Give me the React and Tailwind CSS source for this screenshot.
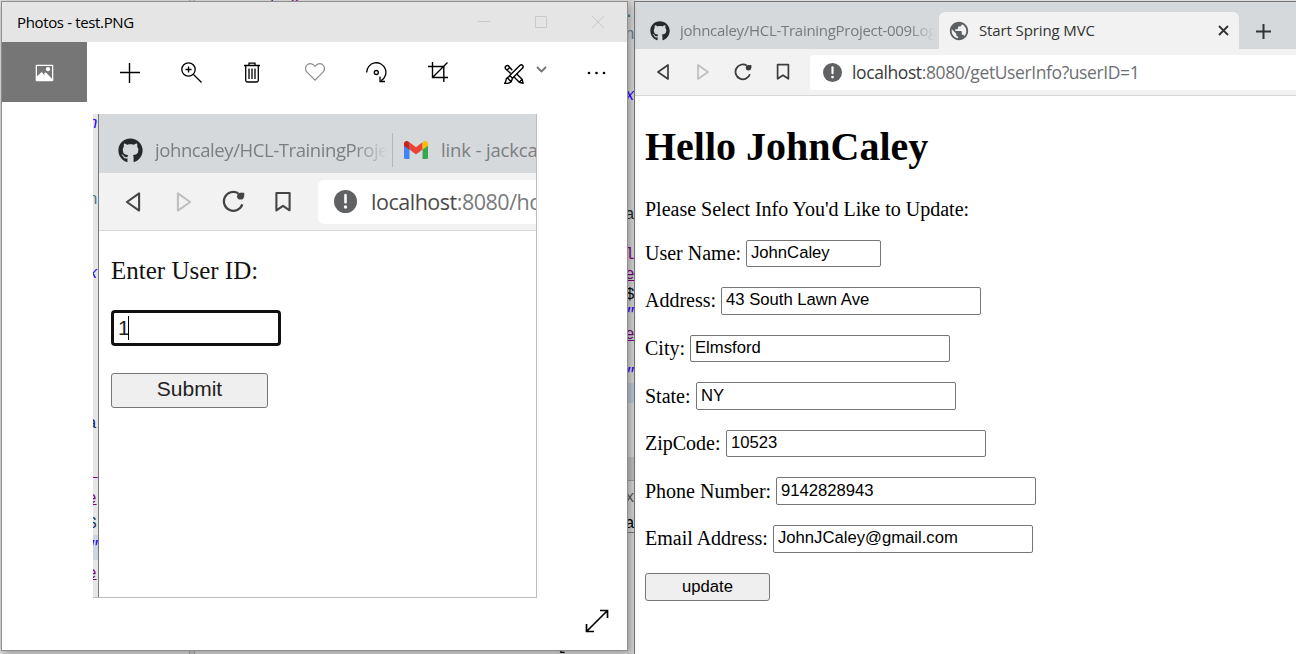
import React from "react";
import { FaGithub } from "react-icons/fa";
import { MdPublic } from "react-icons/md";

const stroke = { fill: "none", stroke: "currentColor" };

function Back({ className }) {
  return (
    <svg viewBox="0 0 14 18" className={className} {...stroke} strokeWidth="1.700" strokeLinejoin="round">
      <path d="M12 2v14L2 9z" />
    </svg>
  );
}

function Reload({ className }) {
  return (
    <svg viewBox="0 0 18 18" className={className} {...stroke} strokeWidth="1.800">
      <path d="M12.700 2.500A7.400 7.400 0 1 0 15.900 11.300" />
      <circle cx="14.500" cy="4.800" r="2.700" fill="currentColor" stroke="none" />
      <path d="M14.500 2.100h2.900v3z" fill="currentColor" stroke="none" />
    </svg>
  );
}

function Bookmark({ className }) {
  return (
    <svg viewBox="0 0 14 18" className={className} {...stroke} strokeWidth="1.700" strokeLinejoin="round">
      <path d="M1.600 1.600h10.800v14.200L7 12.200l-5.400 3.600z" />
    </svg>
  );
}

function Alert({ className }) {
  return (
    <svg viewBox="0 0 18 18" className={className}>
      <circle cx="9" cy="9" r="9" fill="#5f6163" />
      <path d="M9 4v5.600" stroke="#fff" strokeWidth="2" strokeLinecap="round" />
      <circle cx="9" cy="13.300" r="1.300" fill="#fff" />
    </svg>
  );
}

function Gmail({ className }) {
  return (
    <svg viewBox="0 0 24 18" className={className}>
      <path d="M0 3v13.400C0 17.300.7 18 1.600 18h3.900V6z" fill="#4285f4" />
      <path d="M24 3v13.400c0 .9-.7 1.600-1.600 1.600h-3.900V6z" fill="#34a853" />
      <path d="M5.500 8.500V1.300L12 6.200l6.500-4.900v7.200L12 13.400z" fill="#ea4335" />
      <path d="M0 2.800v2l5.500 4V1.300L4 .5C2.200-.6 0 .6 0 2.800z" fill="#c5221f" />
      <path d="M24 2.800v2l-5.500 4V1.300L20 .5c1.800-1.100 4 .1 4 2.300z" fill="#fbbc04" />
    </svg>
  );
}

function PhotosWindow() {
  return (
    <section className="absolute left-px top-px flex h-[650px] w-[627px] flex-col border border-[#8f8f8f] bg-white shadow-[2px_3px_8px_rgba(0,0,0,0.3)]">
      <header className="flex h-10 shrink-0 items-center bg-[#e5e5e5] pl-[15px] text-black">
        <h2 className="w-[160px] whitespace-nowrap pt-px text-[15px] tracking-[-0.350px]">Photos - test.PNG</h2>
        <div className="ml-auto flex items-center pr-[23px] text-[#c9c9c9]">
          <svg className="mr-[45px] h-3 w-3" viewBox="0 0 12 12" {...stroke}><path d="M0 5.500h12" /></svg>
          <svg className="mr-[45px] h-3 w-3" viewBox="0 0 12 12" {...stroke}><path d="M.5.5h11v11H.5z" /></svg>
          <svg className="h-3 w-3" viewBox="0 0 12 12" {...stroke}><path d="m0 0 12 12M12 0 0 12" /></svg>
        </div>
      </header>
      <nav className="flex h-[60px] shrink-0 items-center text-black">
        <div className="flex h-[60px] w-[85px] items-center justify-center bg-[#767676]">
          <svg className="mt-[2px] h-[18px] w-[19px]" viewBox="0 0 19 18">
            <rect x=".7" y=".7" width="17.600" height="16.600" rx="1" fill="#fff" />
            <path d="M2 2h15v14L10.800 9.600 9.300 11 6.700 8 2 12.200z" fill="#767676" />
            <path d="m9 9.800 1.700-1.600 6.300 6.600v1.500h-1.600z" fill="#fff" />
            <circle cx="13" cy="5.200" r="2.100" fill="#fff" />
          </svg>
        </div>
        <svg className="ml-[33px] mt-[2px] h-5 w-5" viewBox="0 0 20 20" {...stroke} strokeWidth="1.400"><path d="M9.500 0v20M0 9.500h20" /></svg>
        <svg className="ml-[41px] h-[21px] w-[21px]" viewBox="0 0 21 21" {...stroke} strokeWidth="1.300">
          <circle cx="7.500" cy="7.500" r="6.700" /><path d="m12.500 12.500 8 8M7.500 4.500v6M4.500 7.500h6" />
        </svg>
        <svg className="ml-[42px] h-[21px] w-4" viewBox="0 0 16 21" {...stroke} strokeWidth="1.300">
          <path d="M0 3.500h16M5 3.500V1.200h6v2.300M1.700 3.500v14.800c0 1 .6 1.700 1.600 1.700h9.400c1 0 1.600-.7 1.600-1.700V3.500M5 6.500v10.500M8 6.500v10.500M11 6.500v10.500" />
        </svg>
        <svg className="ml-[45px] h-[18px] w-5 text-[#8b8b8b]" viewBox="0 0 20 18" {...stroke} strokeWidth="1.200">
          <path d="M10 17.200 2 9.200C-1.500 5 2-.5 6.500.9 8.500 1.500 10 3.500 10 3.500S11.500 1.500 13.500.9C18-.5 21.500 5 18 9.200z" />
        </svg>
        <svg className="ml-[41px] h-[21px] w-[21px]" viewBox="0 0 21 21" {...stroke} strokeWidth="1.300">
          <path d="M.7 10.500a9.600 9.600 0 1 1 14.500 8.100M14 14.500v5h5" /><circle cx="10.300" cy="10.500" r="2" />
        </svg>
        <svg className="ml-[41px] h-5 w-5" viewBox="0 0 20 20" {...stroke} strokeWidth="1.400">
          <path d="M4.500 0v15.500H20M0 4.500h15.800V20M4.500 15.500 19.500.5" />
        </svg>
        <svg className="ml-[56px] mt-[3px] h-5 w-5" viewBox="0 0 20 20" {...stroke} strokeWidth="1.400" strokeLinejoin="round">
          <path d="M8.300 6.200 4.800 2.300C3.500.3.200 2.500 1.500 4.700l5.200 4.800M12.500 9.800l5.600 5.400 1 4-3.800-1-5.700-5.700M15.300 18.200l2.800-3M3 6l3-2.700" />
          <path d="M5.700 11.600 15.800 1.500c2.200-1.800 4.300.7 2.800 2.600L8.500 14.200zM5.700 11.600l2.800 2.600-1.300 3.600C5.700 19.500 3 19.500.7 19.300c1.800-2.200.7-4 2.300-5.300.9-.8 1.700-.6 2.700-2.400zM3.500 14l3.400 3.500" />
        </svg>
        <svg className="ml-[12px] mt-[-5px] h-[7px] w-[11px] text-[#757575]" viewBox="0 0 11 7" {...stroke} strokeWidth="1.900"><path d="m1 1 4.500 4.500L10 1" /></svg>
        <svg className="ml-[40px] mt-[2px] h-1 w-[19px]" viewBox="0 0 19 4" fill="currentColor">
          <circle cx="2" cy="2" r="1.300" /><circle cx="9.500" cy="2" r="1.300" /><circle cx="17" cy="2" r="1.300" />
        </svg>
      </nav>

      <div className="ml-[91px] mt-3 flex h-[484px] w-[444px] border-b border-r border-[#bcbcbc]">
        <div className="relative w-[5px] shrink-0 overflow-hidden bg-[#e6e6e6] font-['Liberation_Mono'] text-[16px] leading-4">
          <span className="absolute -left-[5px] top-[2px] italic text-[#2a00ff]">n</span>
          <span className="absolute -left-[5px] top-[78px] text-[#3f8080]">n</span>
          <span className="absolute -left-[5px] top-[152px] italic text-[#2a00ff]">x</span>
          <span className="absolute -left-[6px] top-[302px] text-[#102060]">a</span>
          <span className="absolute -left-[5px] top-[350px] text-[#7f007f]">_</span>
          <span className="absolute -left-[6px] top-[377px] text-[#7f007f] underline">e</span>
          <span className="absolute -left-[6px] top-[402px] text-[#103050]">$</span>
          <span className="absolute left-0 top-[421px] h-[25px] w-[5px] bg-[#ccd5e2]" />
          <span className="absolute -left-[4px] top-[426px] italic text-[#2a00ff]">"</span>
          <span className="absolute -left-[6px] top-[452px] text-[#7f007f] underline">e</span>
        </div>
        <div className="flex min-w-0 flex-1 flex-col border-l-[1.500px] border-[#777]">
          <div className="flex h-[59px] shrink-0 items-center overflow-hidden bg-[#d5d9dc] pl-[19px] pt-3">
            <FaGithub className="mt-px h-[25px] w-[25px] shrink-0 text-[#24292e]" />
            <span className="ml-[12px] w-[232px] shrink-0 overflow-hidden whitespace-nowrap text-[18.500px] tracking-[-0.420px] text-[#7c7e80] [mask-image:linear-gradient(to_right,#000_86%,transparent)]">johncaley/HCL-TrainingProject</span>
            <span className="ml-[5px] h-[34px] w-px shrink-0 bg-[#b4b7b9]" />
            <Gmail className="ml-[11px] h-[18px] w-6 shrink-0" />
            <span className="ml-[13px] whitespace-nowrap text-[18.500px] tracking-[-0.150px] text-[#7c7e80]">link - jackcaley</span>
          </div>
          <div className="flex h-[58px] shrink-0 items-center border-b border-[#d5d7d9] bg-[#f2f2f2] pl-[25px] text-[#444]">
            <Back className="h-[22px] w-[18px] shrink-0" />
            <Back className="ml-[33px] h-[22px] w-[18px] shrink-0 -scale-x-100 text-[#bfbfbf]" />
            <Reload className="ml-[29px] h-[23px] w-[23px] shrink-0" />
            <Bookmark className="ml-[29px] h-[22px] w-[18px] shrink-0" />
            <div className="ml-[26px] flex h-11 min-w-0 flex-1 items-center overflow-hidden rounded-l-md bg-white pl-4">
              <Alert className="h-[23px] w-[23px] shrink-0" />
              <span className="ml-[14px] whitespace-nowrap pt-[2px] text-[21.500px] tracking-[-0.480px] text-[#77797b]"><b className="font-normal text-[#4a4a4a]">localhost</b>:8080/home</span>
            </div>
          </div>
          <div className="flex flex-col items-start pl-3 pt-[26px]">
            <label className="font-['Liberation_Serif'] text-[25px] leading-7 text-[#111]">Enter User ID:</label>
            <div className="mt-[25px] flex h-[36px] w-[170px] items-center rounded border-[3px] border-[#101010] pb-px pl-[4px] font-['Liberation_Sans'] text-[21px]">
              <span className="text-[#222]">1</span><span className="-ml-[2px] h-6 w-px bg-black" />
            </div>
            <button className="mt-[27px] h-[35px] w-[157px] rounded-[3px] border border-[#767676] bg-[#efefef] pb-[4px] font-['Liberation_Sans'] text-[21px] leading-7 text-[#222]">Submit</button>
          </div>
        </div>
      </div>
      <svg className="ml-auto mr-[18px] mt-[11px] h-6 w-6 text-black" viewBox="0 0 24 24" {...stroke} strokeWidth="1.700">
        <path d="M1.500 22.500 22.500 1.500M15 1.500h7.500V9M1.500 15v7.500H9" />
      </svg>
    </section>
  );
}

const fields = [
  ["User Name:", "JohnCaley", "w-[101px]", "w-[135px]"],
  ["Address:", "43 South Lawn Ave", "w-[76px]", "w-[260px]"],
  ["City:", "Elmsford", "w-[45px]", "w-[260px]"],
  ["State:", "NY", "w-[51px]", "w-[260px]"],
  ["ZipCode:", "10523", "w-[81px]", "w-[260px]"],
  ["Phone Number:", "9142828943", "w-[131px]", "w-[260px]"],
  ["Email Address:", "JohnJCaley@gmail.com", "w-[128px]", "w-[260px]"],
];

function BrowserWindow() {
  return (
    <section className="absolute left-[634px] top-px flex h-[653px] w-[662px] flex-col border-l border-t border-[#777] bg-white">
      <header className="flex h-[47px] shrink-0 items-end bg-[#d5d9dc]">
        <div className="flex h-[37px] w-[304px] items-center pl-[15px]">
          <FaGithub className="h-5 w-5 shrink-0 text-[#24292e]" />
          <span className="ml-[10px] w-[255px] overflow-hidden whitespace-nowrap text-[15px] tracking-[-0.290px] text-[#777a7d] [mask-image:linear-gradient(to_right,#000_90%,transparent)]">johncaley/HCL-TrainingProject-009Log</span>
        </div>
        <div className="flex h-[37px] w-[300px] items-center rounded-t-md bg-[#f2f2f2] pl-[9px] pr-[10px]">
          <MdPublic className="h-[22px] w-[22px] text-[#5c6064]" />
          <span className="ml-[9px] whitespace-nowrap text-[15px] tracking-[-0.120px] text-[#333]">Start Spring MVC</span>
          <svg className="ml-auto h-[11px] w-[11px] text-[#333]" viewBox="0 0 11 11" {...stroke} strokeWidth="1.800"><path d="m1 1 9 9M10 1 1 10" /></svg>
        </div>
        <svg className="mb-[10px] ml-[17px] h-[15px] w-[15px] text-[#333]" viewBox="0 0 15 15" {...stroke} strokeWidth="2"><path d="M7.500 0v15M0 7.500h15" /></svg>
      </header>
      <nav className="flex h-[47px] shrink-0 items-center border-b border-[#d5d7d9] bg-[#f2f2f2] pl-[21px] text-[#3c3c3c]">
        <Back className="h-[18px] w-[14px]" />
        <Back className="ml-[26px] h-[18px] w-[14px] -scale-x-100 text-[#bfbfbf]" />
        <Reload className="ml-6 h-[18px] w-[18px]" />
        <Bookmark className="ml-6 h-[18px] w-[14px]" />
        <div className="ml-5 flex h-[35px] flex-1 items-center rounded-l bg-white pl-[13px]">
          <Alert className="h-[19px] w-[19px]" />
          <span className="ml-[10px] whitespace-nowrap pt-px text-[17.500px] tracking-[-0.400px] text-[#6d6f72]"><b className="font-normal text-[#3a3a3a]">localhost</b>:8080/getUserInfo?userID=1</span>
        </div>
      </nav>
      <main className="flex flex-col items-start pl-[10px] font-['Liberation_Serif'] text-[20px] text-black">
        <h1 className="mt-[28px] whitespace-nowrap text-[40px] font-bold leading-[46px]">Hello JohnCaley</h1>
        <p className="mt-[27px] whitespace-nowrap leading-6">Please Select Info You'd Like to Update:</p>
        <form className="mt-[18.500px] flex flex-col gap-5">
          {fields.map(([label, value, lw, iw]) => (
            <div key={label} className="flex h-[27.600px] items-center">
              <label className={lw + " whitespace-nowrap pb-px leading-6"}>{label}</label>
              <input defaultValue={value} className={iw + " h-[27.600px] rounded-[2px] border border-[#767676] bg-white px-1 pb-px font-['Liberation_Sans'] text-[16.670px] outline-none"} />
            </div>
          ))}
          <button type="button" className="h-7 w-[125px] rounded-[3px] border border-[#767676] bg-[#efefef] font-['Liberation_Sans'] text-[16.670px] leading-6">update</button>
        </form>
      </main>
    </section>
  );
}

export default function App() {
  return (
    <div className="relative h-[654px] w-[1296px] overflow-hidden bg-[#dcdcdc] font-['Open_Sans','Noto_Sans',sans-serif]">
      <div className="absolute left-[189px] top-0 h-[654px] w-[6px] border-x border-[#aaa] bg-[#ccc]" />
      <div className="absolute left-[270px] -top-[13px] font-['Liberation_Mono'] text-[16px] leading-4 text-[#7f007f]">p</div>
      <div className="absolute left-[290px] -top-[13px] font-['Liberation_Mono'] text-[16px] leading-4 text-[#7f007f]">g</div>
      <div className="absolute left-[557px] top-[638px] font-['Liberation_Mono'] text-[16px] leading-4 text-black">[</div>
      <div className="absolute left-[627px] top-0 h-[654px] w-2 overflow-hidden bg-[#d2d2d2] font-['Liberation_Mono'] text-[16px] leading-4">
        <span className="absolute -left-[3px] top-[5px] text-[#267f7f]">.c</span>
        <span className="absolute -left-[2px] top-[27px] text-[#678]">n</span>
        <span className="absolute -left-[2px] top-[88px] italic text-[#2a00ff]">x</span>
        <span className="absolute -left-[2px] top-[207px] text-[#222]">a</span>
        <span className="absolute -left-[2px] top-[247px] text-[#7f007f]">l</span>
        <span className="absolute -left-[2px] top-[267px] text-[#7f007f] underline">e</span>
        <span className="absolute -left-[2px] top-[287px] text-black">$</span>
        <span className="absolute -left-[2px] top-[307px] italic text-[#2a00ff]">"</span>
        <span className="absolute -left-[2px] top-[327px] text-[#7f007f] underline">e</span>
        <span className="absolute -left-[2px] top-[367px] italic text-[#2a00ff]">"</span>
        <span className="absolute left-0 top-[383px] h-5 w-2 bg-[#b9c3d1]" />
        <span className="absolute left-0 top-[457px] h-6 w-2 border-b border-[#999] bg-[#bcbcbc]" />
        <span className="absolute -left-[2px] top-[490px] text-[#555]">x</span>
        <span className="absolute -left-[2px] top-[516px] text-black">a</span>
        <span className="absolute left-0 top-[532px] h-px w-2 bg-[#777]" />
      </div>
      <BrowserWindow />
      <PhotosWindow />
    </div>
  );
}
